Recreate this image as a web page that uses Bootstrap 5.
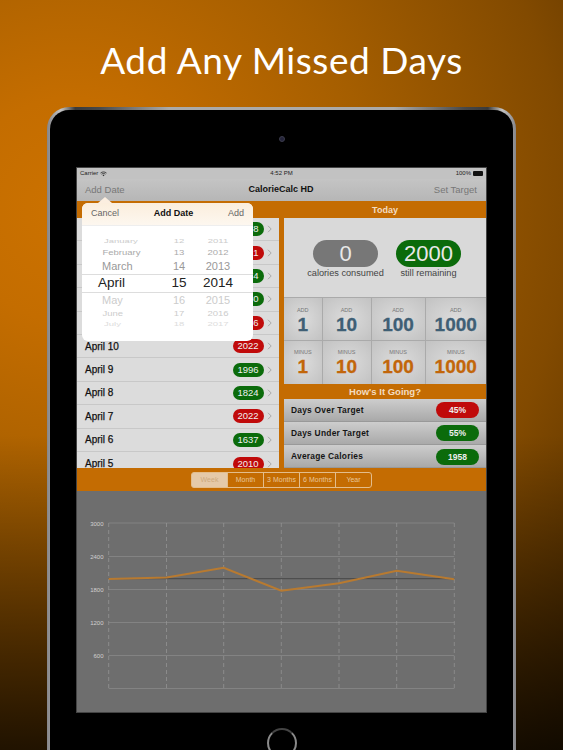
<!DOCTYPE html>
<html lang="en">
<head>
<meta charset="utf-8">
<title>CalorieCalc HD</title>
<link href="https://cdn.jsdelivr.net/npm/bootstrap@5.3.0/dist/css/bootstrap.min.css" rel="stylesheet">
<style>
html,body{height:750px;overflow:hidden}
body{margin:0;font-family:"Liberation Sans",Arial,sans-serif;color:#111;
 background:linear-gradient(to bottom,rgba(0,0,0,0) 58%,rgba(0,0,0,.72) 100%),
 radial-gradient(circle 800px at 70px 210px,#cc7200 0,#c46d00 14%,#a55e00 38%,#824a00 62%,#4f2d00 85%,#2a1800 100%)}
.shot-title{font-family:Lato,"Open Sans",sans-serif;font-size:37px;line-height:46px;color:#fff;text-align:center;padding-top:37px;height:107px;letter-spacing:.55px;margin-left:-1px}
.tablet{width:469px;height:643px;overflow:hidden;margin-left:47px;border:3px solid transparent;border-bottom:0;border-radius:22px 22px 0 0;padding-top:57px;
 background:linear-gradient(#000,#000) padding-box,linear-gradient(to right,#86868a 0,#c4c4c4 3%,#3a3a3a 6%,#484848 11%,#aaa 26%,#aaa 74%,#484848 89%,#3a3a3a 94%,#c4c4c4 97%,#86868a 100%) border-box}
.camera{width:6px;height:6px;flex:none;border-radius:50%;background:#23233a;border:1px solid #3c3c4c;margin-top:-31.5px;margin-bottom:25.5px}
.screen{width:411px;height:546px;flex:none;border:1px solid #444;background:#6e6e6e;position:relative;overflow:hidden}
.status-bar{height:11px;flex:none;font-size:6px;line-height:11px;background:#c2c2c2;padding:0 3px;color:#222}
.status-side{width:70px}
.wifi{width:7px;height:6px;margin-left:2px}
.batt{width:10px;height:4.5px;background:#111;border-radius:1px;margin-left:2px}
.nav-strip{height:22px;flex:none;background:linear-gradient(#c4c4c4,#b6b6b6);font-size:9.5px;padding:0 9px 0 8px;color:#777}
.nav-name{color:#111;font-weight:700;font-size:9px}
.nav-side{width:70px}
.main-zone{height:268px;flex:none;background:#c46c02}
.left-col{width:201.5px;height:267px;padding-top:17px;flex:none}
.right-col{width:202px;margin-left:5.5px;flex:none}
.day-list{height:250px;overflow:hidden;background:#dcdcdc}
.day-row{height:23.4px;flex:none;padding:0 7px 0 8px;background:#dcdcdc;border:0;border-bottom:1px solid #c8c8c8;font-size:10px;color:#111;-webkit-text-stroke:.25px #111}
.day-pill{width:31px;height:14px;padding:0;font-size:9.5px;font-weight:400;line-height:14px;color:#f0f0f0;margin-left:auto;-webkit-text-stroke:0}
.pill-g{background:#0b6b0b}
.pill-r{background:#c00a0a}
.chev{width:5px;height:8px;margin-left:3px}
.band{height:17px;line-height:18px;font-size:9px;font-weight:700;color:#f3dcc0;text-align:center}
.band-2{height:15px;line-height:15px;font-size:9.5px}
.today-box{height:79px;background:#d9d9d9;padding:22px 0 0 4px}
.big-pill{width:65px;height:27px;flex:none;border-radius:14px;color:#e8e8e8;font-size:22px;line-height:27px;text-align:center}
.big-grey{background:#777}
.big-green{background:#0b6b0b}
.big-cell{width:65px;font-size:9.2px;color:#444;line-height:11px}
.pill-cap{margin-top:1px;white-space:nowrap}
.pill-gap{gap:18px}
.count-row{height:42.5px;border-top:1px solid #aaa}
.count-row-2{height:44px}
.count-cell{background:radial-gradient(ellipse at center,#dcdcdc 0,#c2c2c2 100%);border-right:1px solid #aaa;text-align:center;padding-top:7.5px}
.w1{width:38.5px}.w2{width:49px}.w3{width:54px}.w4{flex:1;border-right:0}
.count-lab{font-size:5.5px;line-height:8px;color:#777}
.count-num{font-size:19px;line-height:21px;font-weight:700;-webkit-text-stroke:.3px}
.blue-num{color:#3f5f75}
.or-num{color:#c2660a}
.stat-row{height:23.3px;background:linear-gradient(#cdcdcd,#a9a9a9);padding:1px 7px 0;font-size:8.4px;font-weight:700;color:#151515;border-bottom:1px solid #999;letter-spacing:.25px}
.stat-pill{width:43px;height:16px;line-height:16px;padding:0;font-size:8.5px;font-weight:700;color:#eee;letter-spacing:0}
.tool-strip{height:22px;flex:none;background:#c46c02}
.seg-btn{width:37px;height:16px;padding:0;font-size:7px;line-height:14px;color:#e8c79a;border:1px solid #e3bd8c;border-radius:3px;white-space:nowrap}
.seg-on{background:#e5c9a8;color:#cda97f}
.chart-svg{display:block;flex:none}
.chart-txt{font-family:"Liberation Sans",Arial,sans-serif;font-size:6px;fill:#d0d0d0}
.pop-arrow{position:absolute;left:21px;top:29px;width:0;height:0;border-left:7px solid transparent;border-right:7px solid transparent;border-bottom:6px solid #fbeee0}
.pop-box{position:absolute;left:5px;top:35px;width:171px;height:138px;border-radius:6px;background:#fff;overflow:hidden}
.pop-head{height:23px;background:linear-gradient(#fbeedd,#fdf7ef);font-size:9px;padding:0 9px;color:#666;border-bottom:1px solid #eee}
.pop-name{font-weight:700;color:#111}
.pick{padding-top:10.5px}
.pick-row{display:flex;align-items:center;color:#aaa}
.pm{width:78px;flex:none}
.pd{width:38px;text-align:center;flex:none}
.py{width:40px;text-align:center;flex:none}
.r1{height:10px;font-size:9.5px;color:#ccc}
.r2{height:12px;font-size:9.5px;color:#aaa}
.r3{height:15px;font-size:11px;color:#999}
.r4{height:19px;font-size:13.5px;color:#222;border-top:1px solid #ddd;border-bottom:1px solid #ddd}
.r5{height:15px;font-size:11px;color:#ccc}
.r6{height:12px;font-size:9.5px;color:#ccc}
.r7{height:10px;font-size:9.5px;color:#ddd}
.sq1 span{display:inline-block;transform:scaleY(.5)}
.sq2 span{display:inline-block;transform:scaleY(.85)}
.ml-a{padding-left:22px}.ml-b{padding-left:20.5px}.ml-c{padding-left:20px}.ml-d{padding-left:16px}
.home-btn{width:30px;height:30px;flex:none;border-radius:50%;border:2px solid #8a8a8a;margin-top:15px;background:#000;border-top-color:#444}
</style>
</head>
<body>
<h1 class="shot-title fw-normal m-0">Add Any Missed Days</h1>
<div class="tablet d-flex flex-column align-items-center">
  <div class="camera"></div>
  <div class="screen d-flex flex-column">
    <div class="status-bar d-flex align-items-center justify-content-between">
      <div class="status-side d-flex align-items-center"><span>Carrier</span>
        <svg class="wifi" viewBox="0 0 14 11"><path d="M1 3.6C4.4.6 9.6.6 13 3.6M3 5.8C5.2 4 8.8 4 11 5.8" fill="none" stroke="#222" stroke-width="1.5"/><path d="M5 7.6C6.2 6.8 7.8 6.8 9 7.6L7 10Z" fill="#222"/></svg></div>
      <span>4:52 PM</span>
      <div class="status-side d-flex align-items-center justify-content-end"><span>100%</span><span class="batt"></span></div>
    </div>
    <div class="nav-strip d-flex align-items-center justify-content-between">
      <span class="nav-side">Add Date</span><span class="nav-name">CalorieCalc HD</span><span class="nav-side text-end">Set Target</span>
    </div>
    <div class="main-zone d-flex">
      <div class="left-col">
        <div class="day-list list-group list-group-flush rounded-0 flex-column flex-nowrap" id="days"></div>
      </div>
      <div class="right-col">
        <div class="band">Today</div>
        <div class="today-box d-flex justify-content-center pill-gap">
          <div class="big-cell d-flex flex-column align-items-center"><div class="big-pill big-grey">0</div><div class="pill-cap">calories consumed</div></div>
          <div class="big-cell d-flex flex-column align-items-center"><div class="big-pill big-green">2000</div><div class="pill-cap">still remaining</div></div>
        </div>
        <div class="count-row d-flex">
          <div class="count-cell w1"><div class="count-lab">ADD</div><div class="count-num blue-num">1</div></div>
          <div class="count-cell w2"><div class="count-lab">ADD</div><div class="count-num blue-num">10</div></div>
          <div class="count-cell w3"><div class="count-lab">ADD</div><div class="count-num blue-num">100</div></div>
          <div class="count-cell w4"><div class="count-lab">ADD</div><div class="count-num blue-num">1000</div></div>
        </div>
        <div class="count-row count-row-2 d-flex">
          <div class="count-cell w1"><div class="count-lab">MINUS</div><div class="count-num or-num">1</div></div>
          <div class="count-cell w2"><div class="count-lab">MINUS</div><div class="count-num or-num">10</div></div>
          <div class="count-cell w3"><div class="count-lab">MINUS</div><div class="count-num or-num">100</div></div>
          <div class="count-cell w4"><div class="count-lab">MINUS</div><div class="count-num or-num">1000</div></div>
        </div>
        <div class="band band-2">How's It Going?</div>
        <div class="stat-row d-flex align-items-center justify-content-between"><span>Days Over Target</span><span class="badge rounded-pill stat-pill pill-r">45%</span></div>
        <div class="stat-row d-flex align-items-center justify-content-between"><span>Days Under Target</span><span class="badge rounded-pill stat-pill pill-g">55%</span></div>
        <div class="stat-row d-flex align-items-center justify-content-between"><span>Average Calories</span><span class="badge rounded-pill stat-pill pill-g">1958</span></div>
      </div>
    </div>
    <div class="tool-strip d-flex justify-content-center align-items-center">
      <div class="btn-group" role="group">
        <button type="button" class="btn seg-btn seg-on">Week</button>
        <button type="button" class="btn seg-btn">Month</button>
        <button type="button" class="btn seg-btn">3 Months</button>
        <button type="button" class="btn seg-btn">6 Months</button>
        <button type="button" class="btn seg-btn">Year</button>
      </div>
    </div>
    <svg class="chart-svg" width="409" height="221" viewBox="77 491 409 221">
      <path d="M108.7 523H454.3M108.7 556.5H454.3M108.7 589.5H454.3M108.7 622.5H454.3M108.7 655.5H454.3M108.7 688.5H454.3" stroke="#8c8c8c" stroke-width=".7" fill="none"/>
      <path d="M108.7 523V688M166.5 523V688M223.7 523V688M281.3 523V688M339 523V688M396.7 523V688M454.3 523V688" stroke="#989898" stroke-width=".7" stroke-dasharray="4 3" fill="none"/>
      <path d="M108.7 578.7H454.3" stroke="#3c3c3c" stroke-width=".8"/>
      <polyline points="108.7,579 166.5,577.5 223.7,567.7 281.3,590.7 339,583.3 396.7,570.7 454.3,579.3" fill="none" stroke="#b87a30" stroke-width="2"/>
      <g class="chart-txt" text-anchor="end">
        <text x="103.5" y="525.5">3000</text><text x="103.5" y="559">2400</text><text x="103.5" y="592">1800</text><text x="103.5" y="624.5">1200</text><text x="103.5" y="657.5">600</text>
      </g>
    </svg>
    <div class="pop-arrow"></div>
    <div class="pop-box">
      <div class="pop-head d-flex align-items-center justify-content-between"><span>Cancel</span><span class="pop-name">Add Date</span><span>Add</span></div>
      <div class="pick">
        <div class="pick-row r1 sq1"><div class="pm ml-a"><span>January</span></div><div class="pd"><span>12</span></div><div class="py"><span>2011</span></div></div>
        <div class="pick-row r2 sq2"><div class="pm ml-b"><span>February</span></div><div class="pd"><span>13</span></div><div class="py"><span>2012</span></div></div>
        <div class="pick-row r3"><div class="pm ml-c"><span>March</span></div><div class="pd"><span>14</span></div><div class="py"><span>2013</span></div></div>
        <div class="pick-row r4"><div class="pm ml-d"><span>April</span></div><div class="pd"><span>15</span></div><div class="py"><span>2014</span></div></div>
        <div class="pick-row r5"><div class="pm ml-c"><span>May</span></div><div class="pd"><span>16</span></div><div class="py"><span>2015</span></div></div>
        <div class="pick-row r6 sq2"><div class="pm ml-b"><span>June</span></div><div class="pd"><span>17</span></div><div class="py"><span>2016</span></div></div>
        <div class="pick-row r7 sq1"><div class="pm ml-a"><span>July</span></div><div class="pd"><span>18</span></div><div class="py"><span>2017</span></div></div>
      </div>
    </div>
  </div>
  <div class="home-btn"></div>
</div>
<script>
var rows=[["","1968","g"],["","2021","r"],["","1974","g"],["","1980","g"],["","2036","r"],["April 10","2022","r"],["April 9","1996","g"],["April 8","1824","g"],["April 7","2022","r"],["April 6","1637","g"],["April 5","2010","r"]];
document.getElementById('days').innerHTML=rows.map(function(r){return '<div class="list-group-item day-row d-flex align-items-center"><span>'+r[0]+'</span><span class="badge rounded-pill day-pill pill-'+r[2]+'">'+r[1]+'</span><svg class="chev" viewBox="0 0 5 8"><path d="M1 .8 4.2 4 1 7.2" fill="none" stroke="#a8a8a8" stroke-width="1"/></svg></div>';}).join('');
</script>
<script src="https://cdn.jsdelivr.net/npm/bootstrap@5.3.0/dist/js/bootstrap.bundle.min.js"></script>
</body>
</html>
